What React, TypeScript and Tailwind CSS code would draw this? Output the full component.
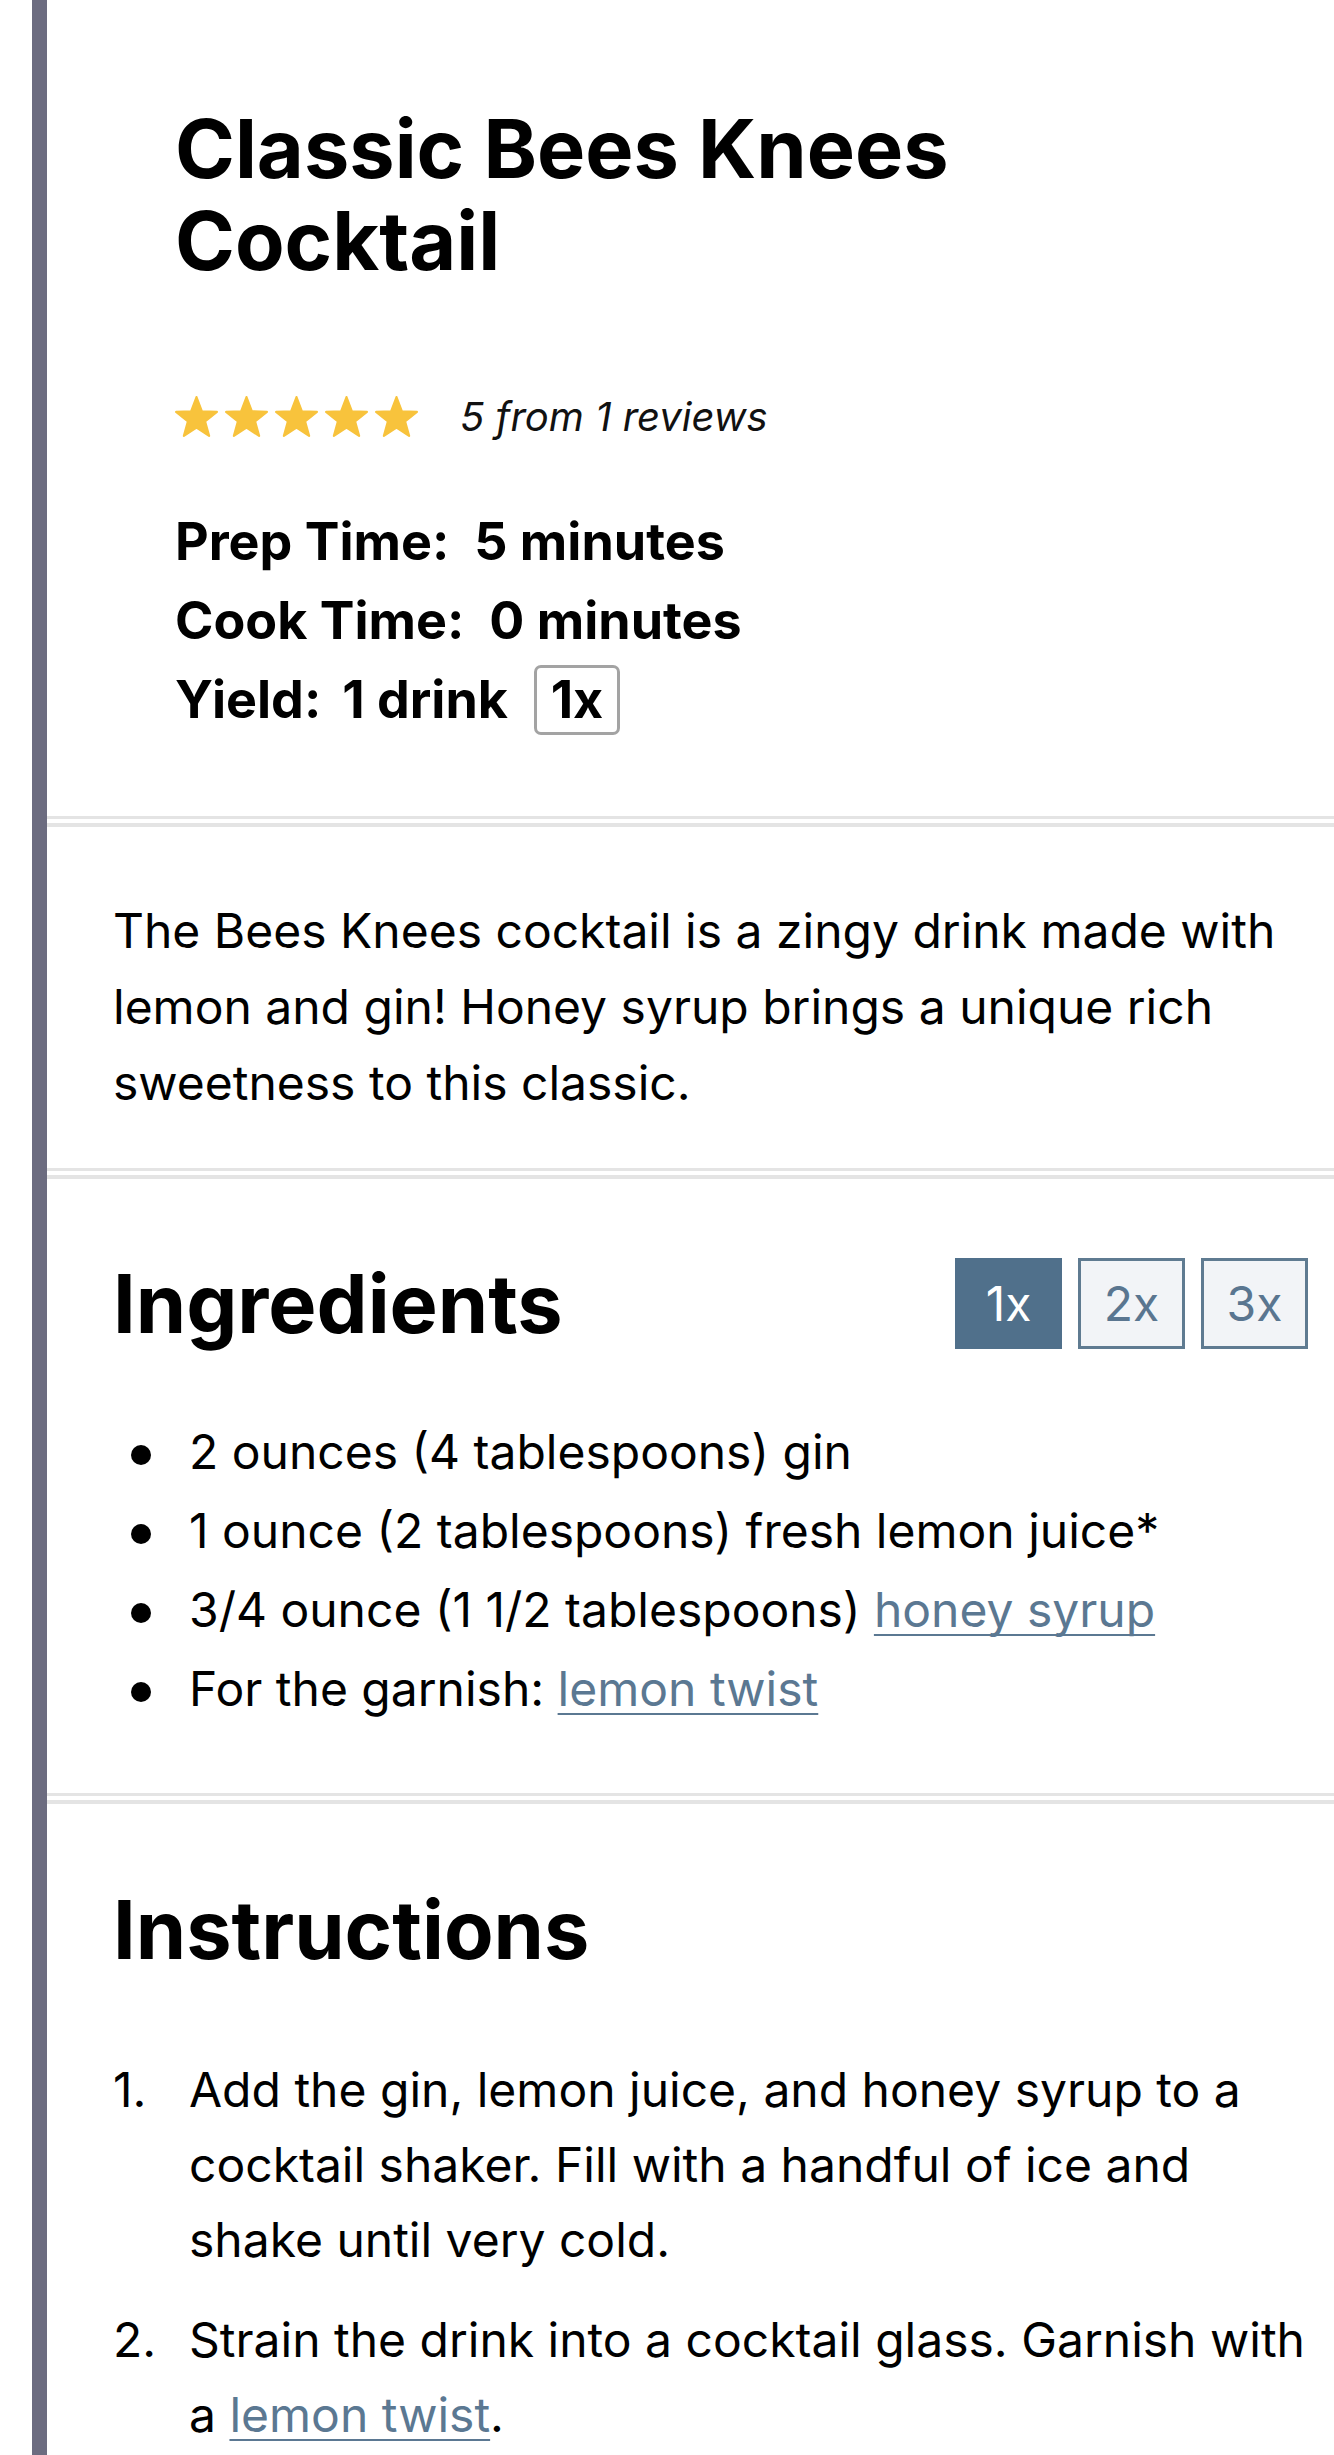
const Star = () => (
  <svg width="43" height="41" viewBox="-10.01 -10.5 20.02 19.1" className="shrink-0">
    <path
      d="M0,-10 L2.469,-3.398 L9.511,-3.09 L3.994,1.298 L5.878,8.09 L0,4.2 L-5.878,8.09 L-3.994,1.298 L-9.511,-3.09 L-2.469,-3.398 Z"
      fill="#f8c33c"
      stroke="#f8c33c"
      strokeWidth="1"
      strokeLinejoin="round"
    />
  </svg>
);

const Divider = () => (
  <div>
    <div className="h-[3px] bg-[#e4e4e4]" />
    <div className="mt-[4px] h-[4px] bg-[#e4e4e4]" />
  </div>
);

const linkCls =
  "text-[#5b7892] underline decoration-[2px] underline-offset-[7px] [text-decoration-skip-ink:none]";

const ingredients = [
  <>2 ounces (4 tablespoons) gin</>,
  <>1 ounce (2 tablespoons) fresh lemon juice*</>,
  <>
    3/4 ounce (1 1/2 tablespoons) <a className={linkCls}>honey syrup</a>
  </>,
  <>
    For the garnish: <a className={linkCls}>lemon twist</a>
  </>,
];

export default function App() {
  return (
    <div className="min-h-screen bg-white pl-[32px] font-['Inter',sans-serif] text-black">
      <div className="min-h-screen border-l-[15px] border-[#6c6c80]">
        {/* Header */}
        <header className="pl-[128px] pr-[20px] pt-[103px] pb-[77px]">
          <h1 className="max-w-[900px] text-[81px] font-bold leading-[92px]">
            Classic Bees Knees Cocktail
          </h1>
          <div className="mt-[109px] flex h-[41px] items-center">
            <div className="flex items-center gap-[7px]">
              <Star />
              <Star />
              <Star />
              <Star />
              <Star />
            </div>
            <span className="ml-[42px] text-[40px] italic leading-[40px] text-[#111]">
              5 from 1 reviews
            </span>
          </div>
          <div className="mt-[65px] text-[52px] font-bold leading-[79px]">
            <div className="flex items-center">
              <span className="mr-[25px]">Prep Time:</span>
              <span>5 minutes</span>
            </div>
            <div className="flex items-center">
              <span className="mr-[25px]">Cook Time:</span>
              <span>0 minutes</span>
            </div>
            <div className="flex items-center">
              <span className="mr-[21px]">Yield:</span>
              <span>1 drink</span>
              <span className="ml-[26px] flex h-[70px] w-[86px] items-center justify-center rounded-[7px] border-[3px] border-[#a3a3a3]">
                1x
              </span>
            </div>
          </div>
        </header>

        <Divider />

        {/* Description */}
        <section className="pl-[66px] pr-[20px] pt-[66px] pb-[47px]">
          <p className="text-[48px] leading-[76px]">
            The Bees Knees cocktail is a zingy drink made with lemon and gin! Honey syrup brings a
            unique rich sweetness to this classic.
          </p>
        </section>

        <Divider />

        {/* Ingredients */}
        <section className="pl-[66px] pr-[20px] pt-[79px] pb-[66px]">
          <div className="flex items-start justify-between">
            <h2 className="text-[81px] font-bold leading-[92px]">Ingredients</h2>
            <div className="mr-[6px] flex gap-[16px]">
              <button className="flex h-[91px] w-[107px] items-center justify-center border-[3px] border-[#50708b] bg-[#50708b] text-[48px] text-white">
                1x
              </button>
              <button className="flex h-[91px] w-[107px] items-center justify-center border-[3px] border-[#5f7b91] bg-[#f2f4f7] text-[48px] text-[#5a7690]">
                2x
              </button>
              <button className="flex h-[91px] w-[107px] items-center justify-center border-[3px] border-[#5f7b91] bg-[#f2f4f7] text-[48px] text-[#5a7690]">
                3x
              </button>
            </div>
          </div>
          <ul className="mt-[64px] flex flex-col gap-[3px] text-[48px] leading-[76px]">
            {ingredients.map((c, i) => (
              <li key={i} className="flex items-start">
                <span className="w-[76px] shrink-0">
                  <span className="ml-[18px] mt-[31px] block h-[20px] w-[20px] rounded-full bg-black" />
                </span>
                <span>{c}</span>
              </li>
            ))}
          </ul>
        </section>

        <Divider />

        {/* Instructions */}
        <section className="pl-[66px] pr-[20px] pt-[80px] pb-[6px]">
          <h2 className="text-[81px] font-bold leading-[92px]">Instructions</h2>
          <ol className="mt-[76px] flex flex-col gap-[25px] text-[48px] leading-[75px]">
            <li className="flex">
              <span className="w-[76px] shrink-0">1.</span>
              <span>
                Add the gin, lemon juice, and honey syrup to a cocktail shaker. Fill with a handful of
                ice and shake until very cold.
              </span>
            </li>
            <li className="flex">
              <span className="w-[76px] shrink-0">2.</span>
              <span>
                Strain the drink into a cocktail glass. Garnish with a{" "}
                <a className={linkCls}>lemon twist</a>.
              </span>
            </li>
          </ol>
        </section>
      </div>
    </div>
  );
}
